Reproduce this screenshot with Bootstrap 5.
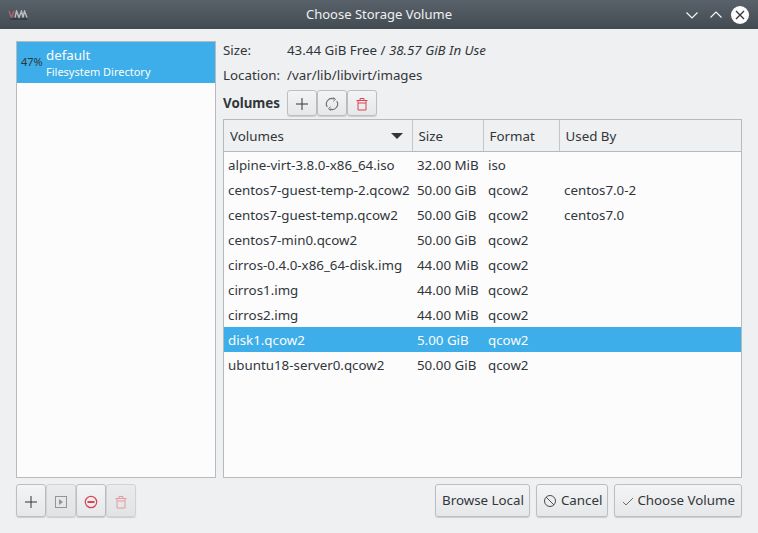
<!DOCTYPE html>
<html lang="en">
<head>
    <meta charset="UTF-8">
    <meta name="viewport" content="width=device-width, initial-scale=1.0">
    <title>Choose Storage Volume</title>
    <link href="https://cdn.jsdelivr.net/npm/bootstrap@5.3.0/dist/css/bootstrap.min.css" rel="stylesheet">
    <style>
        html, body {
            height: 533px;
            overflow: hidden;
        }
        body {
            background-color: #eff0f1;
            color: #31363b;
            font-family: "Noto Sans", sans-serif;
            font-size: 13.33px;
            line-height: 18px;
        }
        .title-bar {
            height: 29px;
            background: linear-gradient(#59626a, #434b52);
            color: #eff0f1;
            padding: 0 9px 0 8px;
        }
        .title-text {
            left: 0;
            right: 0;
            text-align: center;
            top: 5px;
            font-size: 13px;
        }
        .win-logo {
            width: 20px;
            height: 10px;
        }
        .win-gap-a {
            margin-right: 10px;
        }
        .win-gap-b {
            margin-right: 8px;
        }
        .main-area {
            height: 504px;
            padding: 12px 16px 16px;
        }
        .pool-list {
            width: 200px;
            height: 437px;
            background: #fcfcfc;
            border: 1px solid #b8babc;
        }
        .pool-row {
            height: 41px;
            background: #3daee9;
            color: #fcfcfc;
        }
        .pool-pct {
            width: 29px;
            padding-left: 4px;
            font-size: 11px;
            color: #31363b;
            padding-top: 11px;
        }
        .pool-name {
            padding-top: 4px;
        }
        .pool-type {
            font-size: 11px;
            line-height: 15px;
        }
        .right-pane {
            width: 519px;
            margin-left: 7px;
            margin-top: -3px;
        }
        .info-row {
            height: 24px;
            margin-bottom: 1px;
        }
        .info-label {
            width: 64px;
        }
        .tool-row {
            height: 26px;
            margin-top: 3px;
        }
        .tool-row strong {
            margin-right: 7px;
        }
        .tool-btn {
            width: 30px;
            height: 26px;
            padding: 0;
            border: 1px solid #bcbebf;
            border-radius: 3px;
            background: linear-gradient(#f3f4f5, #e6e7e9);
            box-shadow: 0 1px 1px rgba(0, 0, 0, .15);
        }
        .tool-btn-big {
            height: 33px;
        }
        .tool-btn.faded {
            border-color: #d0d2d3;
            background: linear-gradient(#eaebec, #e2e3e5);
        }
        .vol-box {
            height: 359px;
            margin-top: 3px;
            background: #fcfcfc;
            border: 1px solid #b8babc;
        }
        .vol-table {
            table-layout: fixed;
            width: 517px;
            margin: 0;
            font-size: 13.33px;
            color: #31363b;
            --bs-table-bg: transparent;
            --bs-table-color: #31363b;
        }
        .vol-table th {
            height: 31px;
            padding: 1px 6px 0;
            background: #eff0f1;
            font-weight: 400;
            border-bottom: 1px solid #b8babc;
            border-right: 1px solid #c4c6c7;
            vertical-align: middle;
            position: relative;
        }
        .vol-table th:last-child {
            border-right: 0;
        }
        .vol-table td {
            height: 25px;
            padding: 0 4px;
            border: 0;
            vertical-align: middle;
            white-space: nowrap;
            overflow: hidden;
        }
        .vol-table td + td {
            padding-left: 5px;
        }
        .vol-table tbody tr:first-child td {
            height: 26px;
            padding-top: 1px;
        }
        .vol-table tr.picked td {
            background: #3daee9;
            color: #fcfcfc;
            --bs-table-color-state: #fcfcfc;
        }
        .sort-mark {
            position: absolute;
            right: 9px;
            top: 13px;
            border-left: 6px solid transparent;
            border-right: 6px solid transparent;
            border-top: 6px solid #31363b;
        }
        .foot-row {
            margin-top: 6px;
            height: 33px;
        }
        .foot-gap {
            gap: 6px;
        }
        .foot-btn {
            height: 33px;
            padding: 0 5px 0 6px;
            color: #31363b;
            font-size: 13.33px;
            border: 1px solid #bcbebf;
            border-radius: 3px;
            background: linear-gradient(#f3f4f5, #e6e7e9);
            box-shadow: 0 1px 1px rgba(0, 0, 0, .15);
        }
        .foot-btn.with-icon {
            gap: 4px;
        }
        .foot-btn.with-check {
            gap: 3px;
            padding: 0 6px 0 5px;
        }
    </style>
</head>
<body>
    <div class="title-bar d-flex align-items-center justify-content-between position-relative">
        <svg class="win-logo" viewBox="0 0 20 10">
            <path d="M1 1l2.500 6.500L6 1" fill="none" stroke="#a8606e" stroke-width="1.600"/>
            <path d="M7 7.500L8.500 1l2.500 6.500L13.500 1 15 7.500M15 7.500L16.500 1 19 7.500" fill="none" stroke="#b9bcbf" stroke-width="1.400"/>
            <path d="M2 9h17" stroke="#2b2f33" stroke-width="1.200"/>
        </svg>
        <div class="title-text position-absolute">Choose Storage Volume</div>
        <div class="d-flex align-items-center position-relative">
            <svg class="win-gap-a" width="14" height="14" viewBox="0 0 14 14"><path d="M1.500 4.500l5.500 5.500 5.500-5.500" fill="none" stroke="#fcfcfc" stroke-width="1.100"/></svg>
            <svg class="win-gap-b" width="14" height="14" viewBox="0 0 14 14"><path d="M1.500 9.500l5.500-5.500 5.500 5.500" fill="none" stroke="#fcfcfc" stroke-width="1.100"/></svg>
            <svg width="18" height="18" viewBox="0 0 18 18"><circle cx="9" cy="9" r="9" fill="#fcfcfc"/><path d="M5 5l8 8M13 5l-8 8" stroke="#31363b" stroke-width="1.300"/></svg>
        </div>
    </div>

    <div class="main-area">
        <div class="d-flex">
            <div class="pool-list">
                <div class="pool-row d-flex">
                    <div class="pool-pct">47%</div>
                    <div class="pool-name">
                        <div>default</div>
                        <div class="pool-type">Filesystem Directory</div>
                    </div>
                </div>
            </div>
            <div class="right-pane">
                <div class="info-row d-flex align-items-center"><span class="info-label">Size:</span><span>43.44 GiB Free / <em>38.57 GiB In Use</em></span></div>
                <div class="info-row d-flex align-items-center"><span class="info-label">Location:</span><span>/var/lib/libvirt/images</span></div>
                <div class="tool-row d-flex align-items-center">
                    <strong>Volumes</strong>
                    <button class="tool-btn" type="button"><svg width="14" height="14" viewBox="0 0 14 14"><path d="M7 1v12M1 7h12" stroke="#31363b" stroke-width="1"/></svg></button>
                    <button class="tool-btn" type="button"><svg width="14" height="14" viewBox="0 0 14 14"><path d="M2.300 10A5.500 5.500 0 0 1 9 1.900M11.700 4A5.500 5.500 0 0 1 5 12.100" fill="none" stroke="#6b6e70" stroke-width="1.100"/><path d="M8 0.500l2.500 1.800L8.300 4.300M6 13.500L3.500 11.700 5.700 9.700" fill="none" stroke="#6b6e70" stroke-width="1"/></svg></button>
                    <button class="tool-btn" type="button"><svg width="14" height="14" viewBox="0 0 14 14"><path d="M1.500 3.500h11M5 3.500V1.500h4v2M3 3.500v9.500h8V3.500M3 6h8" fill="none" stroke="#da4453" stroke-width="1"/></svg></button>
                </div>
                <div class="vol-box">
                    <table class="table vol-table">
                        <colgroup><col style="width:188px"><col style="width:71px"><col style="width:76px"><col></colgroup>
                        <thead>
                            <tr><th>Volumes<span class="sort-mark"></span></th><th>Size</th><th>Format</th><th>Used By</th></tr>
                        </thead>
                        <tbody>
                            <tr><td>alpine-virt-3.8.0-x86_64.iso</td><td>32.00 MiB</td><td>iso</td><td></td></tr>
                            <tr><td>centos7-guest-temp-2.qcow2</td><td>50.00 GiB</td><td>qcow2</td><td>centos7.0-2</td></tr>
                            <tr><td>centos7-guest-temp.qcow2</td><td>50.00 GiB</td><td>qcow2</td><td>centos7.0</td></tr>
                            <tr><td>centos7-min0.qcow2</td><td>50.00 GiB</td><td>qcow2</td><td></td></tr>
                            <tr><td>cirros-0.4.0-x86_64-disk.img</td><td>44.00 MiB</td><td>qcow2</td><td></td></tr>
                            <tr><td>cirros1.img</td><td>44.00 MiB</td><td>qcow2</td><td></td></tr>
                            <tr><td>cirros2.img</td><td>44.00 MiB</td><td>qcow2</td><td></td></tr>
                            <tr class="picked"><td>disk1.qcow2</td><td>5.00 GiB</td><td>qcow2</td><td></td></tr>
                            <tr><td>ubuntu18-server0.qcow2</td><td>50.00 GiB</td><td>qcow2</td><td></td></tr>
                        </tbody>
                    </table>
                </div>
            </div>
        </div>

        <div class="foot-row d-flex justify-content-between">
            <div class="d-flex">
                <button class="tool-btn tool-btn-big" type="button"><svg width="14" height="14" viewBox="0 0 14 14"><path d="M7 1v12M1 7h12" stroke="#31363b" stroke-width="1"/></svg></button>
                <button class="tool-btn tool-btn-big faded" type="button"><svg width="14" height="14" viewBox="0 0 14 14"><rect x="1.500" y="1.500" width="11" height="11" fill="none" stroke="#929596" stroke-width="1"/><path d="M5 4l4 3-4 3z" fill="#929596"/></svg></button>
                <button class="tool-btn tool-btn-big" type="button"><svg width="14" height="14" viewBox="0 0 14 14"><circle cx="7" cy="7" r="5.700" fill="none" stroke="#da4453" stroke-width="1.200"/><path d="M3.500 7h7" stroke="#da4453" stroke-width="2"/></svg></button>
                <button class="tool-btn tool-btn-big faded" type="button"><svg width="14" height="14" viewBox="0 0 14 14"><path d="M1.500 3.500h11M5 3.500V1.500h4v2M3 3.500v9.500h8V3.500M3 6h8" fill="none" stroke="#e59aa2" stroke-width="1"/></svg></button>
            </div>
            <div class="d-flex foot-gap">
                <button class="btn foot-btn" type="button">Browse Local</button>
                <button class="btn foot-btn with-icon d-flex align-items-center" type="button"><svg width="14" height="14" viewBox="0 0 14 14"><circle cx="7" cy="7" r="5.500" fill="none" stroke="#4d4d4d" stroke-width="1"/><path d="M3 3l8 8" stroke="#4d4d4d" stroke-width="1"/></svg>Cancel</button>
                <button class="btn foot-btn with-check d-flex align-items-center" type="button"><svg width="14" height="14" viewBox="0 0 14 14"><path d="M3 8l3 3 7-7" fill="none" stroke="#6b6e70" stroke-width="1"/></svg>Choose Volume</button>
            </div>
        </div>
    </div>

    <script src="https://cdn.jsdelivr.net/npm/bootstrap@5.3.0/dist/js/bootstrap.bundle.min.js"></script>
</body>
</html>
